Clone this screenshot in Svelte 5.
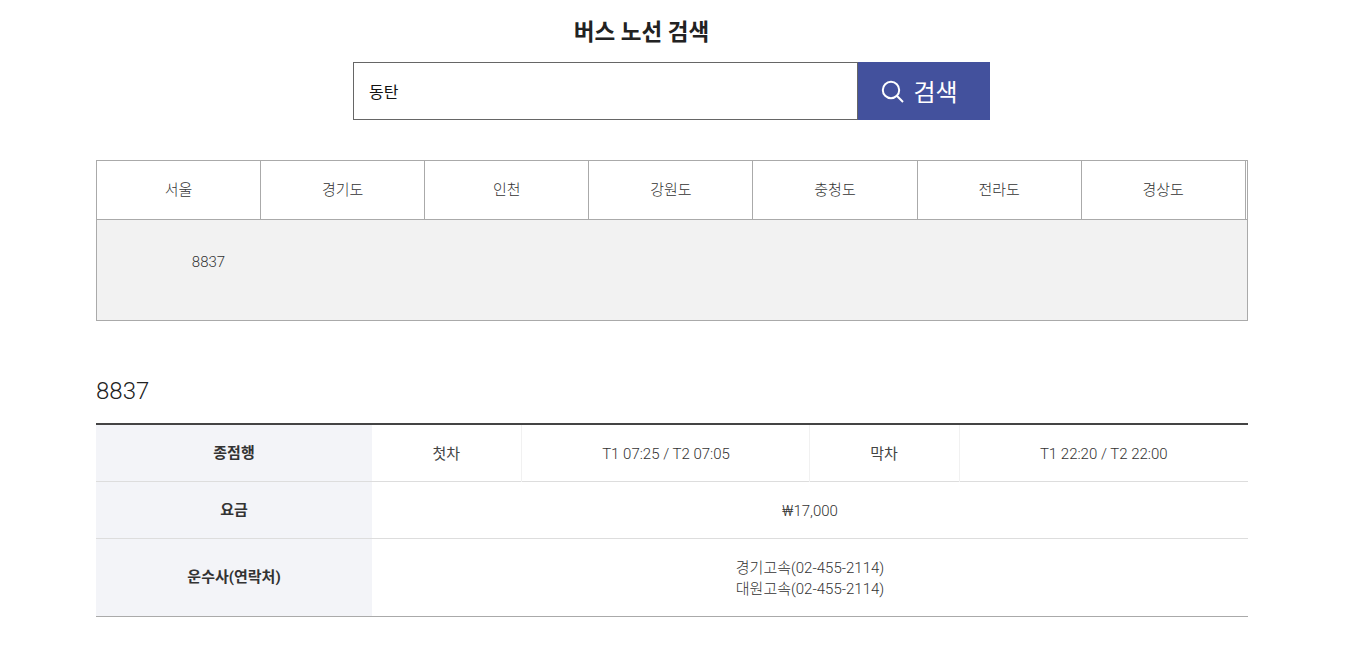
<script>
  const regions = ['서울', '경기도', '인천', '강원도', '충청도', '전라도', '경상도'];
</script>

<div class="page">
  <h2 class="title">버스 노선 검색</h2>

  <form class="search" on:submit|preventDefault>
    <input class="search-input" type="text" value="동탄" />
    <button class="search-btn" type="submit">
      <svg width="24" height="24" viewBox="0 0 24 24" fill="none" stroke="#fff" stroke-width="2" aria-hidden="true">
        <circle cx="10" cy="11" r="8.2" />
        <path d="M15.8 16.8 22 23" />
      </svg>
      검색
    </button>
  </form>

  <div class="regions">
    <ul class="tabs">
      {#each regions as region}
        <li>{region}</li>
      {/each}
    </ul>
    <div class="routes">
      <span class="route">8837</span>
    </div>
  </div>

  <h3 class="route-name">8837</h3>

  <table class="info">
    <colgroup>
      <col style="width: 276px" />
      <col style="width: 149px" />
      <col style="width: 288px" />
      <col style="width: 150px" />
      <col />
    </colgroup>
    <tbody>
      <tr class="r1">
        <th>종점행</th>
        <td class="label">첫차</td>
        <td class="time">T1 07:25 / T2 07:05</td>
        <td class="label">막차</td>
        <td>T1 22:20 / T2 22:00</td>
      </tr>
      <tr class="r2">
        <th>요금</th>
        <td colspan="4">₩17,000</td>
      </tr>
      <tr class="r3">
        <th>운수사(연락처)</th>
        <td colspan="4">경기고속(02-455-2114)<br />대원고속(02-455-2114)</td>
      </tr>
    </tbody>
  </table>
</div>

<style>
  :global(body) {
    margin: 0;
    background: #fff;
    font-family: Roboto, "Noto Sans CJK KR", sans-serif;
    font-weight: 300;
    color: #333;
  }

  .page {
    width: 1152px;
    margin-left: 96px;
    padding-bottom: 37px;
  }

  .title {
    margin: 0;
    padding: 16px 61px 0 0;
    height: 47px;
    box-sizing: border-box;
    text-align: center;
    font-size: 22.5px;
    line-height: 32px;
    font-weight: 700;
    color: #222;
  }

  .search {
    display: flex;
    width: 637px;
    height: 58px;
    margin: 15px 0 0 257px;
  }

  .search-input {
    flex: 1;
    min-width: 0;
    box-sizing: border-box;
    height: 58px;
    padding: 0 15px;
    border: 1px solid #666;
    border-right: 0;
    outline: 0;
    font-family: inherit;
    font-size: 16px;
    font-weight: 400;
    color: #111;
  }

  .search-btn {
    display: flex;
    align-items: center;
    justify-content: center;
    gap: 8px;
    width: 133px;
    height: 58px;
    padding: 0 8px 2px 0;
    border: 0;
    border-left: 1px solid #666;
    box-sizing: border-box;
    background: #43519d;
    color: #fff;
    font-family: inherit;
    font-size: 24px;
    font-weight: 400;
  }

  .search-btn svg {
    margin: 2px 0 0 -1px;
  }

  .regions {
    margin-top: 40px;
    border: 1px solid #aaa;
  }

  .tabs {
    display: grid;
    grid-template-columns: repeat(7, 164.11px);
    margin: 0;
    padding: 0;
    list-style: none;
    border-bottom: 1px solid #aaa;
  }

  .tabs li {
    box-sizing: border-box;
    height: 58px;
    padding-top: 1px;
    border-right: 1px solid #aaa;
    text-align: center;
    font-size: 15px;
    line-height: 57px;
  }

  .routes {
    height: 100px;
    box-sizing: border-box;
    background: #f2f2f2;
    padding-top: 32px;
  }

  .route {
    display: block;
    width: 223px;
    text-align: center;
    font-size: 15px;
    line-height: 21px;
  }

  .route-name {
    margin: 56px 0 0;
    font-size: 24px;
    line-height: 28px;
    font-weight: 300;
    color: #222;
  }

  .info {
    width: 100%;
    margin-top: 18px;
    border-collapse: collapse;
    table-layout: fixed;
    border-top: 2px solid #444;
    border-bottom: 1px solid #aaa;
    font-size: 15px;
    line-height: 21px;
  }

  .info th,
  .info td {
    padding: 0;
    text-align: center;
  }

  .info td {
    padding-top: 4px;
  }

  .info td.time {
    padding-left: 2px;
  }

  .info tr + tr th,
  .info tr + tr td {
    border-top: 1px solid #ddd;
  }

  .info th {
    padding-top: 2px;
    background: #f3f4f8;
    font-weight: 700;
    color: #333;
  }

  .info .r3 th {
    padding-top: 0;
  }

  .info .label {
    font-weight: 400;
    color: #444;
    border-right: 1px solid #f1f1f1;
  }

  .info td.label + td + td.label {
    border-left: 1px solid #f1f1f1;
  }

  .r1 {
    height: 57px;
  }

  .r2 {
    height: 57px;
  }

  .r3 {
    height: 78px;
  }
</style>
